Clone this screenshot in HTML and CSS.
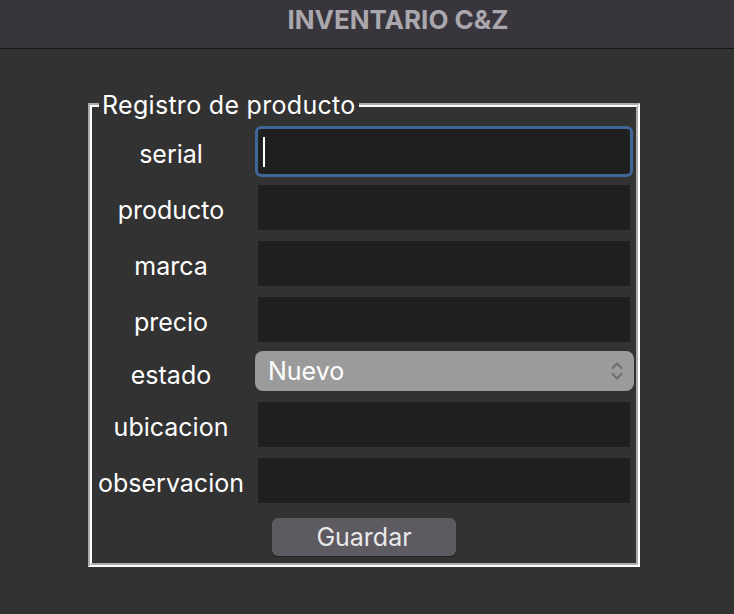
FILE: index.html
```html
<!DOCTYPE html>
<html lang="es">
<head>
<meta charset="utf-8">
<title>INVENTARIO C&amp;Z</title>
<link rel="stylesheet" href="styles.css">
</head>
<body>
<header class="titlebar"><h1 class="title">INVENTARIO C&amp;Z</h1></header>
<main class="main">
  <fieldset class="group">
    <legend class="legend">Registro de producto</legend>
    <div class="form">
      <label class="label">serial</label>
      <div class="entry entry-focus"><span class="caret"></span></div>
      <label class="label">producto</label>
      <div class="entry"></div>
      <label class="label">marca</label>
      <div class="entry"></div>
      <label class="label">precio</label>
      <div class="entry"></div>
      <label class="label label-sel">estado</label>
      <div class="select">
        <span class="select-text">Nuevo</span>
        <svg class="chev" width="14" height="24" viewBox="0 0 14 24"><path d="M2.5 9 L7 4.5 L11.5 9 M2.5 15 L7 19.5 L11.5 15" fill="none" stroke="#6f6f6f" stroke-width="2.2" stroke-linecap="round" stroke-linejoin="round"/></svg>
      </div>
      <label class="label">ubicacion</label>
      <div class="entry"></div>
      <label class="label">observacion</label>
      <div class="entry"></div>
    </div>
    <div class="actions"><button class="btn" type="button">Guardar</button></div>
  </fieldset>
</main>
</body>
</html>
```
FILE: styles.css
```css
html, body {
  margin: 0;
  padding: 0;
  background: #323232;
  height: 100%;
}
body {
  font-family: Inter, "Liberation Sans", sans-serif;
  color: #ffffff;
}
.titlebar {
  height: 48px;
  background: #38363c;
  border-bottom: 1px solid #151515;
  display: flex;
  align-items: center;
  justify-content: center;
  padding-left: 62px;
  box-sizing: content-box;
}
.title {
  margin: 0;
  font-size: 26px;
  font-weight: 700;
  color: #aaa7ae;
  letter-spacing: 0;
  margin-top: -10px;
}
.main {
  padding: 42px 0 0 88px;
}
.group {
  margin: 0;
  width: 544px;
  padding: 0 0 7px 0;
  border: 4px groove #ffffff;
  box-sizing: content-box;
}
.legend {
  margin-left: 7px;
  padding: 0 3px;
  font-size: 25px;
  letter-spacing: 0.3px;
  line-height: 28px;
  color: #ffffff;
}
.form {
  display: grid;
  grid-template-columns: 158px 372px;
  column-gap: 8px;
  row-gap: 11px;
  padding-top: 10px;
  align-items: center;
}
.label {
  text-align: center;
  font-size: 25px;
  line-height: 30px;
  padding-top: 5px;
  color: #ffffff;
}
.entry {
  height: 45px;
  background: #1f1f1f;
  display: flex;
  align-items: center;
}
.entry-focus {
  outline: 3px solid #3f6798;
  border-radius: 3px;
}
.caret {
  display: block;
  width: 2px;
  height: 30px;
  margin-left: 5px;
  background: #ffffff;
}
.select {
  height: 40px;
  margin: -2px -4px 0 -3px;
  background: #9b9b9b;
  border-radius: 8px;
  display: flex;
  align-items: center;
  justify-content: space-between;
  padding: 0 10px 0 13px;
}
.select-text {
  font-size: 25px;
  color: #ffffff;
}
.chev {
  display: block;
}
.actions {
  display: flex;
  justify-content: center;
  padding-top: 15px;
}
.btn {
  width: 184px;
  height: 38px;
  background: #5d5a62;
  border: none;
  border-radius: 6px;
  color: #e9e9ea;
  font-family: Inter, "Liberation Sans", sans-serif;
  font-size: 25px;
  box-shadow: 0 1px 1px rgba(0,0,0,0.35);
  padding: 0;
}
```
